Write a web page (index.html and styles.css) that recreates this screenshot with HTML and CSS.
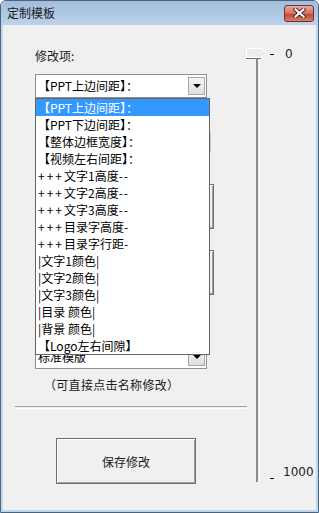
FILE: index.html
```html
<!DOCTYPE html>
<html lang="zh">
<head>
    <meta charset="UTF-8">
    <meta name="viewport" content="width=device-width, initial-scale=1.0">
    <title>定制模板</title>
    <link rel="stylesheet" href="styles.css">
</head>
<body>
<div class="window">
    <div class="titlebar">
        <span class="title">定制模板</span>
        <div class="close">
            <svg width="13" height="10" viewBox="0 0 13 10">
                <path d="M2.5 1.5 L10.5 8.5 M10.5 1.5 L2.5 8.5" stroke="#4b2222" stroke-width="4" stroke-linecap="square"/>
                <path d="M2.5 1.5 L10.5 8.5 M10.5 1.5 L2.5 8.5" stroke="#ffffff" stroke-width="2.2" stroke-linecap="square"/>
            </svg>
        </div>
    </div>

    <div class="client">
        <div class="form">
            <div class="label">修改项:</div>
            <div class="combo">
                <span class="combo-text">【PPT上边间距】：</span>
                <span class="drop-btn"><i class="arrow"></i></span>
                <ul class="list">
                    <li class="selected">【PPT上边间距】：</li>
                    <li>【PPT下边间距】：</li>
                    <li>【整体边框宽度】：</li>
                    <li>【视频左右间距】：</li>
                    <li><span class="plus">+++</span>文字1高度<span class="dash">--</span></li>
                    <li><span class="plus">+++</span>文字2高度<span class="dash">--</span></li>
                    <li><span class="plus">+++</span>文字3高度<span class="dash">--</span></li>
                    <li><span class="plus">+++</span>目录字高度-</li>
                    <li><span class="plus">+++</span>目录字行距-</li>
                    <li>|文字1颜色|</li>
                    <li>|文字2颜色|</li>
                    <li>|文字3颜色|</li>
                    <li>|目录 颜色|</li>
                    <li>|背景 颜色|</li>
                    <li>【Logo左右间隙】</li>
                </ul>
            </div>
            <div class="value-box">0</div>
            <div class="hidden-btn"></div>
            <div class="hidden-btn second"></div>
            <div class="combo combo-template">
                <span class="combo-text">标准模版</span>
                <span class="drop-btn"><i class="arrow"></i></span>
            </div>
            <div class="hint">（可直接点击名称修改）</div>
            <div class="sep"></div>
            <button class="save">保存修改</button>
        </div>

        <div class="slider">
            <div class="track-area">
                <div class="track"></div>
                <div class="thumb">
                    <svg width="21" height="11" viewBox="0 0 21 11">
                        <path d="M0.5 0.5 H15 L20 5 L15 9.5 H0.5 Z" fill="#ececec" stroke="#ffffff"/>
                        <path d="M0 10.5 H15" stroke="#6d6d6d"/>
                    </svg>
                </div>
            </div>
            <div class="scale">
                <div class="mark"><span class="tick"></span><span class="num">0</span></div>
                <div class="mark bottom"><span class="tick"></span><span class="num">1000</span></div>
            </div>
        </div>
    </div>
</div>
</body>
</html>
```

FILE: styles.css
```css
body {
    margin: 0;
    font-family: "Noto Sans CJK SC", "Liberation Sans", sans-serif;
    font-size: 12px;
    color: #000;
}

.window {
    width: 319px;
    height: 513px;
    box-sizing: border-box;
    border: 1px solid #4a6480;
    border-radius: 6px 6px 0 0;
    background: #c2d7ed;
    display: flex;
    flex-direction: column;
    overflow: hidden;
}

.titlebar {
    height: 24px;
    display: flex;
    align-items: center;
    justify-content: space-between;
    padding: 0 4px 0 6px;
    background: linear-gradient(#a3bddb, #bbd2ea);
}

.title {
    font-size: 12px;
    color: #1a1a1a;
    line-height: 16px;
}

.close {
    width: 28px;
    height: 15px;
    border: 1px solid #6b3434;
    border-radius: 3px;
    background: linear-gradient(#e9aa9f, #d2705e 50%, #c1442e 51%, #d57f6a);
    display: flex;
    align-items: center;
    justify-content: center;
}

.close svg {
    display: block;
}

.client {
    flex: 1;
    margin: 0 2px 2px;
    background: #f0f0f0;
    display: flex;
}

.form {
    width: 244px;
    display: flex;
    flex-direction: column;
    padding-top: 23px;
}

.label {
    line-height: 16px;
    margin-left: 32px;
    color: #1a1a1a;
}

.combo {
    position: relative;
    margin: 10px 0 0 32px;
    width: 172px;
    height: 24px;
    box-sizing: border-box;
    border: 1px solid #8f8f8f;
    background: #fff;
    display: flex;
    align-items: center;
    justify-content: space-between;
    padding: 0 1px 0 2px;
}

.combo-text {
    line-height: 16px;
}

.drop-btn {
    width: 17px;
    height: 18px;
    box-sizing: border-box;
    border: 1px solid #a7a7a7;
    background: linear-gradient(#f6f6f6, #dedede);
    display: flex;
    align-items: center;
    justify-content: center;
}

.arrow {
    width: 0;
    height: 0;
    border-left: 4px solid transparent;
    border-right: 4px solid transparent;
    border-top: 4px solid #000;
}

.list {
    position: absolute;
    top: 23px;
    left: -1px;
    width: 173px;
    margin: 0;
    padding: 0;
    list-style: none;
    border: 1px solid #646464;
    background: #fff;
    z-index: 2;
}

.list li {
    height: 17px;
    line-height: 17px;
    padding-left: 2px;
    white-space: nowrap;
}

.list li.selected {
    background: #3399ff;
    color: #fff;
}

.plus {
    letter-spacing: 2px;
}

.dash {
    letter-spacing: 1px;
}

.value-box {
    margin: 35px 0 0 32px;
    width: 176px;
    height: 19px;
    box-sizing: border-box;
    border: 1px solid #c8c8c8;
    background: #fff;
    text-align: right;
    line-height: 17px;
    padding-right: 1px;
    color: #222;
}

.hidden-btn {
    margin: 32px 0 0 53px;
    width: 158px;
    height: 45px;
    box-sizing: border-box;
    border: 1px solid #707070;
    box-shadow: inset 1px 1px #fff, inset -1px -1px #a0a0a0;
    background: #f0f0f0;
}

.hidden-btn.second {
    margin-top: 21px;
}

.combo-template {
    margin-top: 50px;
}

.hint {
    margin: 8px 0 0 41px;
    line-height: 16px;
    color: #1a1a1a;
    letter-spacing: 0.3px;
}

.sep {
    margin: 13px 0 0 12px;
    height: 1px;
    border-top: 1px solid #a0a0a0;
    border-bottom: 1px solid #fff;
}

.save {
    margin: 29px 0 0 53px;
    width: 140px;
    height: 46px;
    font-family: inherit;
    font-size: 12px;
    color: #1a1a1a;
    border: 1px solid #6e6e6e;
    box-shadow: inset 1px 1px #fff, inset -1px -1px #a0a0a0;
    background: #f0f0f0;
    padding: 0;
}

.slider {
    flex: 1;
    display: flex;
    padding-top: 23px;
}

.track-area {
    position: relative;
    width: 20px;
    height: 434px;
}

.track {
    margin: 8px 0 0 9px;
    width: 1px;
    height: 426px;
    border-left: 2px solid #8a8a8a;
    border-right: 1px solid #fff;
}

.thumb {
    position: absolute;
    top: 0;
    left: -1px;
}

.thumb svg {
    display: block;
}

.scale {
    height: 434px;
    display: flex;
    flex-direction: column;
    justify-content: space-between;
}

.mark {
    display: flex;
    align-items: center;
    height: 12px;
}

.tick {
    width: 4px;
    height: 1px;
    margin-left: 3px;
    background: #000;
}

.num {
    font-family: "DejaVu Sans", sans-serif;
    font-size: 12px;
    color: #222;
    margin-left: 11px;
}

.mark.bottom {
    height: 22px;
    align-items: flex-start;
}

.mark.bottom .tick {
    margin-top: 18px;
}

.mark.bottom .num {
    margin: 6px 0 0 9px;
    line-height: 12px;
}
```
